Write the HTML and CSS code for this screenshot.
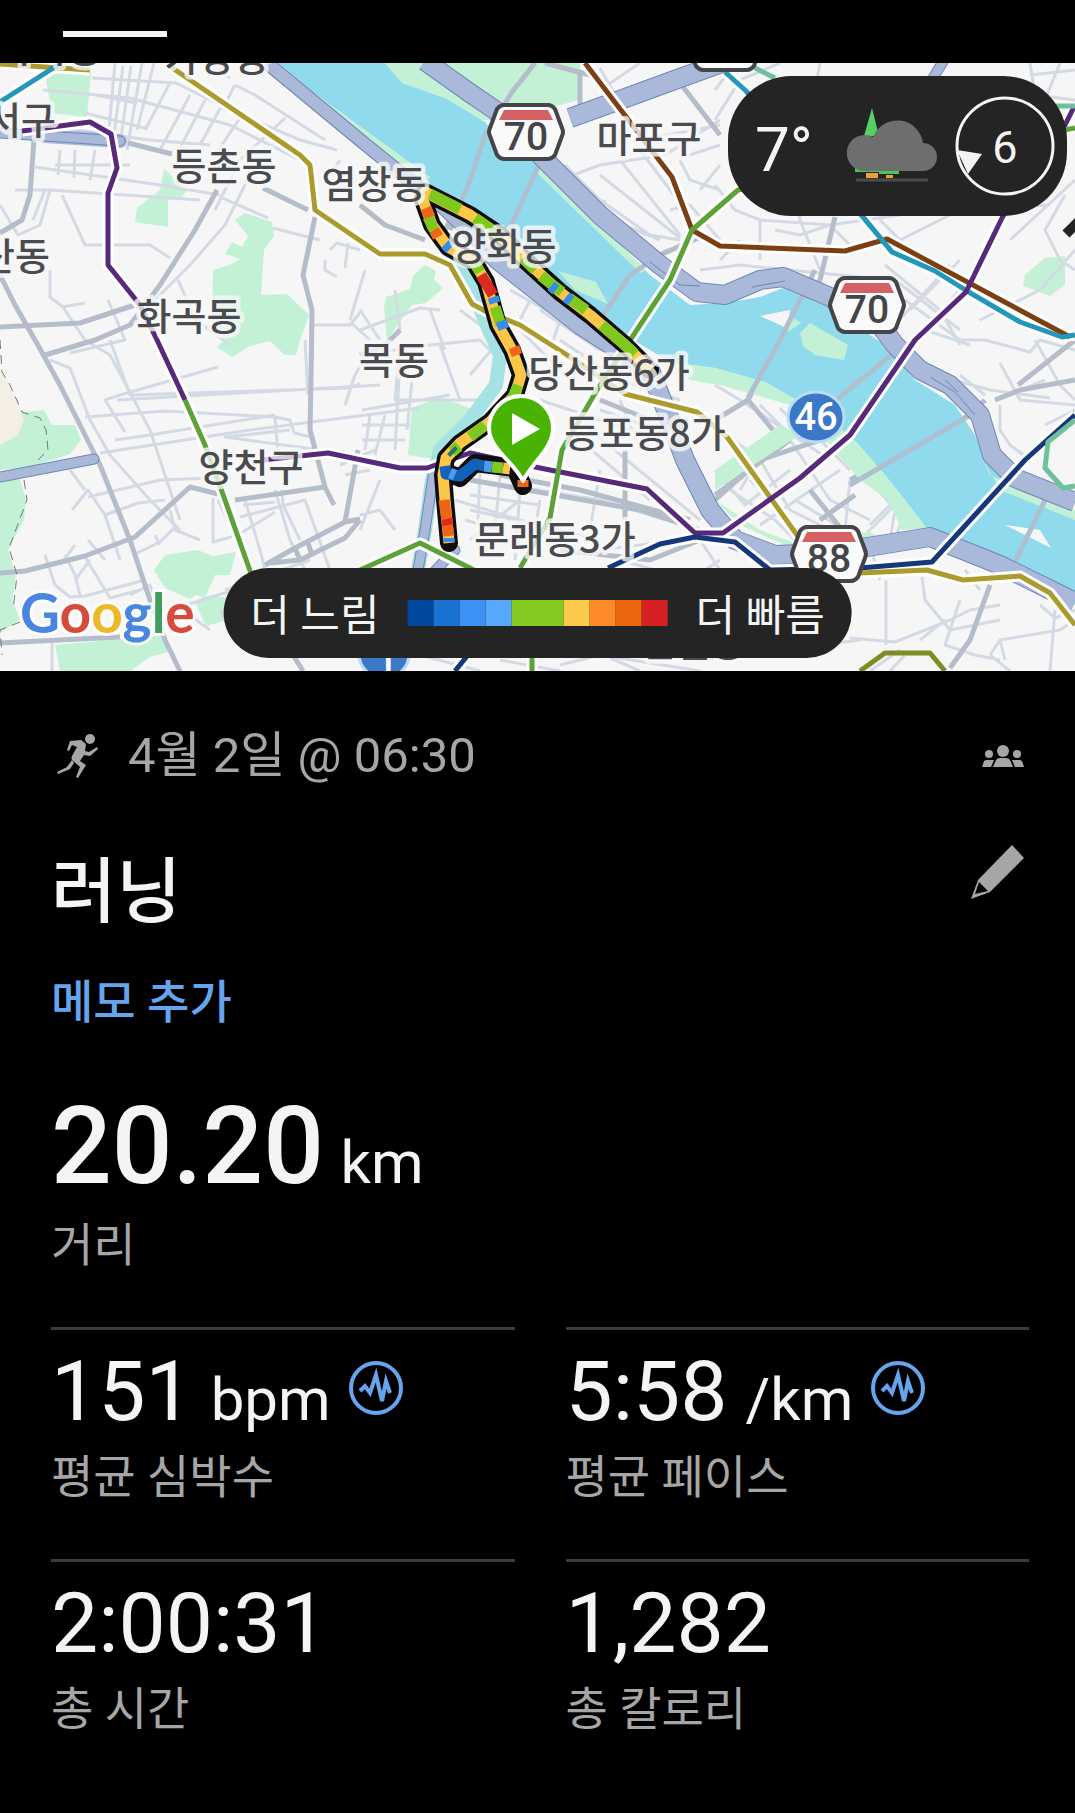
FILE: index.html
```html
<!DOCTYPE html>
<html lang="ko">
  <head>
    <meta charset="UTF-8" />
    <meta name="viewport" content="width=device-width, initial-scale=1.0" />
    <title>러닝</title>
    <link rel="stylesheet" href="styles.css">
  </head>
  <body>
    <header class="tab-bar">
      <div class="tab-indicator"></div>
    </header>

    <section class="map-section">
      <svg class="map" viewBox="0 63 1075 608" preserveAspectRatio="xMidYMid slice" role="img" aria-label="러닝 경로 지도">
        <rect class="land" x="0" y="63" width="1075" height="608" />

        <!-- parks -->
        <g class="park">
          <path d="M45 74L91 72L87 117L52 113Z" />
          <path d="M164 169L187 190L181 198L168 200V227L135 222L137 208L160 190Z" />
          <path d="M235 220L245 213L272 222L274 236L264 250L261 295L287 294L309 315L300 340L296 355H285L270 341L250 346L232 357L217 347L224 340L212 320L213 270L232 264L240 259L225 254L232 242L242 247L248 236Z" />
          <path d="M387 340L384 306L386 297L410 289L413 276L425 265L436 271L434 280L443 288L426 303L412 305Z" />
          <path d="M15 413L44 410L52 425H75L81 440L70 454L30 467L0 470V444Z" />
          <path d="M0 480L20 479L26 500L24 520L8 550L16 575L12 600L20 620L0 632Z" />
          <path d="M154 570L165 555L198 550L213 556L236 552L230 575L215 575L205 598L196 595L190 599L165 588Z" />
          <path d="M195 602L205 596L235 598L227 620L206 626Z" />
          <path d="M55 645L165 635L168 652L150 657L130 671H60Z" />
          <path d="M412 408L440 397L475 410L490 415L440 460L408 455Z" />
          <path d="M385 63H580V100L500 120L480 120L440 96L402 83Z" />
          <path d="M558 271L600 284L608 304L570 290Z" />
          <path d="M1025 275L1045 258L1065 256V285L1050 296L1023 286Z" />
          <path d="M440 250L475 275L492 320L485 340L470 300Z" />
        </g>
        <path class="sand" d="M0 370L10 385L24 420L18 435L0 445Z" />

        <!-- streets -->
        <g class="street">
          <path d="M92 78L176 83L230 110L300 140L337 150M43 90L130 98L230 125L300 160M40 125L150 140L210 145M115 63L108 140M123 66L112 150M131 66L120 145M142 63L127 150M154 63L137 130M170 83L145 130M95 95L137 103M85 113L145 128M190 95L160 150M205 100L180 148M222 105L200 145M240 118L215 155M15 190H50L200 200M35 167L160 185L220 195M60 150L58 175M75 150L74 178M95 150L90 180M55 165H130M62 195L85 245L150 245L170 258M50 190L40 225L18 235L0 205M45 190L33 220" />
          <path d="M235 85L255 95L325 140M210 63L230 78M235 85L222 110M285 118L240 160L215 210M250 175L225 225L190 265L130 325M220 197L268 218M330 175L340 160M108 300L125 340L70 353M50 270V297L63 307L85 340L110 355L150 430L180 520M62 307L85 303M178 280L196 320L230 345M273 228L320 240M313 325H350L362 310M350 322L370 340M330 250L337 243L360 250M348 243L345 268M325 260V270L337 277" />
          <path d="M85 417L165 411L275 417L290 420L294 433L315 438M100 453L250 430L420 408M115 440L150 435L275 415M275 417L278 455M290 430L225 437L320 450M125 432L105 400L120 395L218 367M50 360L70 368L90 420L110 455L150 500L180 530M110 340L130 395L350 388L360 384M117 400L380 385M72 510L88 490L105 515L120 560M88 497L160 480L210 478M105 515L138 503L165 500M170 510L175 530L200 540M175 527L160 542L137 553M155 535L160 545M70 470L85 490M45 555L55 585L70 597L85 596L145 580M85 557L110 598L140 590M65 555L75 575L80 595M88 540L105 560M75 545L60 565M90 560L75 580M52 640V671M130 595L150 585L160 610" />
          <path d="M213 498V542L238 535L275 512M218 500L235 535M245 500L260 550L265 570M275 490L290 540L310 580M240 517L305 500L330 570M243 505L275 502M282 490L283 505L300 540M340 465L375 450M345 475L370 470M345 405L355 375L370 350M305 340L308 395M225 590L310 560M170 610L250 585L270 570M175 605L210 630M240 640L260 620M220 610L235 640" />
          <path d="M362 410L450 395M362 425H410M362 440H405M370 415L365 450M385 415L375 455M400 360L395 450M412 380L407 430M360 355L430 345L480 340L500 360M400 345L395 400L480 400M440 345L460 400M460 310L500 340L470 375M430 310L445 350M360 330L420 308L440 310M360 515L380 510L395 530M380 480L360 530M360 310L380 340M395 290L400 330M365 270L350 320" />
          <path d="M600 68L640 140L720 125M640 63L600 90M560 180L600 165L665 155L720 120M565 165L600 200L650 235L680 240M605 200L600 215L660 240M640 150L700 230M600 175L680 238M680 158L720 145M700 190L720 165M680 160L690 180L720 190M620 160L680 235M670 210L690 205L720 240M700 270L740 265L890 280M715 120L740 80L780 63M735 63L715 90M820 63L810 120M1030 63L1035 95L1075 100M1060 63L1045 100M1030 75L1075 70M715 185L735 210L760 220V260M760 220L830 225L900 215M790 160L800 220L820 270M740 240L720 260M775 230L800 235L830 225L850 245M880 220L910 250M900 240L950 215M950 210L1050 205M1065 195L1045 230L1060 260L1075 270M980 320L1040 290L1075 250M1010 240L1075 180M910 310L960 260M905 300L960 340M885 265L940 310L960 345M925 335L970 275M890 330L950 265M895 280L960 330" />
          <path d="M715 385L740 400L800 440L830 460M760 405L790 435M780 408L815 445M720 430L760 460L790 510L830 530M730 490L775 520L800 545M740 480L770 450L810 425M715 470L745 505L790 470M760 525L840 470M790 440L830 500L870 520M810 430L850 470M795 500L845 530L850 480M850 455L895 510L890 540M870 525L915 480L895 540M830 420L850 450M750 480L770 500M755 465L740 490M860 540L910 490L895 480" />
          <path d="M886 580V645M922 577L925 600L950 630L1000 620M850 638L895 642L950 620L970 610L1000 605M960 600L945 645L975 655L1000 660M990 655L1000 640L1060 630L1075 620M1055 610L1050 671M1040 605L1055 618L1075 610M965 570L980 590M900 650L870 671M905 655L890 671M990 655L1010 671M920 640L945 620M870 545L880 580M1000 640L1005 660" />
          <path d="M960 340H985L1030 352L1040 340L1075 350M1000 363L1020 400L1075 405M1035 340L1060 385L1075 400M985 395L960 375M1000 405V430L1010 445L1030 460M1010 395L1045 380M935 375L990 390L1050 398M970 345L925 330M1045 425L1075 410" />
          <path d="M475 480L600 500L700 530M470 495L540 505M480 470L478 520M500 475L495 530M520 490L515 560M540 500L530 560M560 470L550 520M600 470L590 530M470 510L560 530M465 520L500 530M580 440L650 500M590 430L700 520M600 410L660 430L700 480M470 540L520 500M455 500L520 520L600 540M600 550L680 540M620 560L690 580L720 560M560 340L620 380L680 400M540 310L600 350M520 330L570 380M510 290L600 340M530 300L520 320M560 320L550 350M700 540L720 570M540 400L660 440M620 400L640 450" />
          <path d="M420 655L480 671M500 660L560 671M560 665L600 655L700 671M610 658L640 671M700 660L860 640" />
        </g>

        <g class="arterial">
          <path d="M34 140L30 195L22 220L0 233M0 275L15 305L35 340L60 385L100 465L130 540L150 600L165 640L180 671M0 327L80 323L135 305M0 573L25 571L85 556L135 537L190 487L218 494M235 500L325 487L310 430L311 380L312 310L303 275L315 217M325 487L334 505M263 188L308 210M217 190L195 230L160 285L130 325L95 340L45 355M0 643L120 637M265 565L295 548L345 522L360 519M270 563L300 560L345 538L360 520M128 143L172 154M345 522L358 450M295 548L300 560M308 543L312 555M360 205L385 225L425 240M290 650L303 671" />
          <path d="M535 63L512 92L470 160L460 200L445 230M580 70V105M545 63L590 75M540 163L520 200L500 245M670 250L660 255L705 235M680 83L720 135M360 355L385 345L400 330M470 480L640 510L715 535M500 475L580 490L690 520M600 400L650 420M625 450V520M560 550L650 560L700 540M835 217L820 280L775 350L748 400L715 420M748 400L773 430M715 500L760 460L850 430M715 495L790 440M810 490L850 540M820 520L855 495M1018 385L1075 340M995 400L1020 390L1075 380M990 585L970 640L950 668M780 295L760 350M850 480L970 415L985 400M895 352L840 395M1045 500L1010 570" />
        </g>

        <!-- river -->
        <path class="water" d="M278 63H385L402 83L445 98L485 122L495 135L545 170L650 275L690 305L725 303L760 297L783 288L830 308L885 345L915 380L955 405L975 435L985 460L1075 520V605L1000 570L940 535L925 532L905 500L885 475L850 435L800 402L765 382L715 368L670 362L625 335L560 285L500 250L430 190Z" />
        <g class="park">
          <path d="M280 68L430 177L425 182L276 72Z" />
          <path d="M540 165L646 270L640 273L536 172Z" />
          <path d="M558 271L596 282L608 304L575 290Z" />
          <path d="M670 362L715 368L765 382L800 402L850 435L885 475L905 500L927 528L902 530L888 500L860 480L830 445L790 405L720 385L690 380Z" />
          <path d="M715 470L780 425L800 435L715 490Z" />
          <path d="M715 500L760 530L800 545L870 532L880 538L800 552L740 525Z" />
          <path d="M800 333L810 323L848 345L844 360L815 355L803 346Z" />
          <path d="M983 460L990 475L1075 510V520L1000 490Z" />
        </g>
        <path class="islet" d="M760 316L790 310L787 328ZM1005 525L1040 530L1051 548Z" />
        <path class="park" d="M790 316L801 323L788 332Z" />
        <path class="bridge" d="M487 130L470 180L450 230M540 163L525 195L500 250M645 265L630 275L600 320M815 270L780 340L748 398M895 352L830 405M970 415L850 485M1045 500L1012 568" />
        <path class="stream" d="M445 245L470 285L485 320L500 355L496 385L470 420L440 450L432 480L425 530L418 570" />

        <!-- expressways -->
        <g class="riverside-edge">
          <path d="M267 63L360 140L440 205L500 262" />
        </g>
        <g class="expressway-edge">
          <path d="M425 61L470 93L495 110L550 165L600 215L660 265L697 292L725 295L760 280L783 277L830 297L880 325L895 345L920 370L950 385L980 415L992 455L1015 478L1075 502" />
          <path d="M480 243L500 262L580 325L650 370L670 420L685 460L710 510L735 540L775 555L830 553L930 537L1000 565L1075 602" />
          <path d="M570 118L620 100L680 78L730 60" />
        </g>
        <path class="riverside" d="M267 63L360 140L440 205L500 262" />
        <g class="expressway">
          <path d="M425 61L470 93L495 110L550 165L600 215L660 265L697 292L725 295L760 280L783 277L830 297L880 325L895 345L920 370L950 385L980 415L992 455L1015 478L1075 502" />
          <path d="M480 243L500 262L580 325L650 370L670 420L685 460L710 510L735 540L775 555L830 553L930 537L1000 565L1075 602" />
          <path d="M570 118L620 100L680 78L730 60" />
          <path d="M45 136L120 141" />
        </g>
        <path class="ramp-edge" d="M0 477L94 459M434 470L425 530L418 570M455 550L435 571M0 133L120 141M930 83L944 60" />
        <path class="ramp" d="M0 477L94 459M434 470L425 530L418 570M455 550L435 571M0 133L120 141M930 83L944 60" />
        <path class="ramp-split" d="M650 262L680 285L700 286M930 377L955 392L975 415M945 380L958 392M752 287L785 281" />
        <path class="border-line" d="M0 340L2 372L10 385L22 412L40 418L46 430L48 450L38 460M24 480L27 500L9 548L17 575L13 610M20 622L0 630L2 655" />

        <!-- subway lines -->
        <g class="line-halo">
          <path d="M0 64L90 70M168 65L300 155L310 165L315 210L380 254H425L450 265L472 304L487 312L520 325L567 355L625 394L697 412L727 437L797 535L830 574L860 573L927 570L963 580L1020 576L1050 593L1075 625" />
          <path d="M0 102L58 65M725 72L745 90L863 217L892 252L935 271L967 291L1020 322L1062 337L1075 335" />
          <path d="M22 131L90 122L111 134L117 168L108 193V265L140 305L157 340L185 400L205 445L225 500L255 585M262 460L328 453L400 468H427L450 460L470 453L540 468L647 489L695 533H723L800 478L850 435L915 340L966 292L1003 216L1065 125L1075 105" />
          <path d="M585 63L672 177L692 230L720 246L845 251L887 239L1070 337M1075 128L738 190L692 230L670 280L597 390L562 450L550 518L520 568M360 570L420 543L480 573M532 655V671" />
          <path d="M608 568L660 544L695 537L735 542L770 570L860 568L932 562L1025 460L1075 415M455 671L480 640" />
        </g>
        <g class="line">
          <path class="olive" d="M0 64L90 70M168 65L300 155L310 165L315 210L380 254H425L450 265L472 304L487 312L520 325L567 355L625 394L697 412L727 437L797 535L830 574L860 573L927 570L963 580L1020 576L1050 593L1075 625" />
          <path class="teal" d="M0 102L58 65M725 72L745 90L863 217L892 252" />
          <path class="brown" d="M585 63L672 177L692 230L720 246L845 251L887 239L1070 337" />
          <path class="teal" d="M863 217L892 252L935 271L967 291L1020 322L1062 337L1075 335" />
          <path class="purple" d="M22 131L90 122L111 134L117 168L108 193V265L140 305L157 340L185 400M262 460L328 453L400 468H427L450 460L470 453L540 468L647 489L695 533H723L800 478L850 435L915 340L966 292L1003 216L1065 125L1075 105" />
          <path class="green" d="M185 400L205 445L225 500L255 585M1075 128L738 190L692 230L670 280L597 390L562 450L550 518L520 568M360 570L420 543L480 573M532 655V671" />
          <path class="navy" d="M608 568L660 544L695 537L735 542L770 570L860 568L932 562L1025 460L1075 415M455 671L480 640" />
          <path class="dark-olive" d="M860 671L885 653H930L945 671" />
          <path class="mint" d="M1075 420L1048 442L1045 468L1063 488L1075 486M755 68L775 78M1055 106H1075" />
        </g>
        <path class="tip" d="M1066 234L1082 218" />

        <!-- recorded route -->
        <path class="route-edge" d="M650 370L625 345L590 315L560 292L525 260L500 235L470 215L425 192L423 200L432 225L448 247L474 262L486 282L498 325L512 350L521 375L515 395L490 422L460 443L446 458L443 475L445 500L449 543M446 472L460 478L475 463L515 468L523 486" />
        <g class="route">
          <path stroke="#fcc648" d="M650 370L625 345L590 315L560 292L525 260L500 235L470 215L425 192L423 200L432 225L448 247L474 262L486 282L498 325L512 350L521 375L515 395L490 422L460 443L446 458L443 475L445 500L449 543" />
          <path stroke="#7fc91f" d="M430 194L460 209M475 218L503 238M523 258L535 270M541 276L562 292M569 298L586 310M602 325L625 345L635 354M428 217L434 230M474 262L480 272M495 307L501 325M518 385L513 397L500 413M485 425L470 437" />
          <path stroke="#ef6516" d="M426 208L430 217M434 230L438 237M514 347L517 355M444 500L449 536" />
          <path stroke="#dc2a21" d="M481 275L493 295M447 519L448 525" />
          <path stroke="#348ee8" d="M493 297L495 303M501 321L504 329M551 286L556 290M566 297L571 301M445 244L450 249M449 538L449 542" />
          <path stroke="#ef6516" d="M523 480V487" />
          <path stroke="#1262bd" d="M445 466L446 474L460 476L475 464L484 466" />
          <path stroke="#4c9ce9" d="M484 466L492 467M450 473L455 475" />
          <path stroke="#7fc91f" d="M492 467L503 468M452 452L459 446" />
          <path stroke="#fcc648" d="M503 468L510 469" />
          <path stroke="#20746c" d="M451 450L454 453" />
        </g>

        <!-- place names -->
        <g class="place">
          <text x="56" y="134" text-anchor="end">강서구</text>
          <text x="50" y="270" text-anchor="end">발산동</text>
          <text x="217" y="71">가양동</text>
          <text x="50" y="62">마곡동</text>
          <text x="224" y="180">등촌동</text>
          <text x="374" y="198">염창동</text>
          <text x="504" y="260">양화동</text>
          <text x="649" y="152">마포구</text>
          <text x="189" y="330">화곡동</text>
          <text x="394" y="374">목동</text>
          <text x="251" y="481">양천구</text>
          <text x="609" y="387">당산동6가</text>
          <text x="645" y="447">등포동8가</text>
          <text x="555" y="553">문래동3가</text>
          <text x="693" y="656">신길동</text>
        </g>

        <!-- road shields -->
        <g class="shield">
          <g transform="translate(526 132)">
            <path class="shield-body" d="M-22 -27H22Q26 -27 29 -23L36 -4Q38 0 36 4L29 23Q26 27 22 27H-22Q-26 27 -29 23L-36 4Q-38 0 -36 -4L-29 -23Q-26 -27 -22 -27Z" />
            <path class="shield-top" d="M-22 -22H22L27 -12H-27Z" />
            <text y="18">70</text>
          </g>
          <g transform="translate(867 305)">
            <path class="shield-body" d="M-22 -27H22Q26 -27 29 -23L36 -4Q38 0 36 4L29 23Q26 27 22 27H-22Q-26 27 -29 23L-36 4Q-38 0 -36 -4L-29 -23Q-26 -27 -22 -27Z" />
            <path class="shield-top" d="M-22 -22H22L27 -12H-27Z" />
            <text y="18">70</text>
          </g>
          <g transform="translate(829 554)">
            <path class="shield-body" d="M-22 -27H22Q26 -27 29 -23L36 -4Q38 0 36 4L29 23Q26 27 22 27H-22Q-26 27 -29 23L-36 4Q-38 0 -36 -4L-29 -23Q-26 -27 -22 -27Z" />
            <path class="shield-top" d="M-22 -22H22L27 -12H-27Z" />
            <text y="18">88</text>
          </g>
          <path class="shield-body" transform="translate(725 43)" d="M-22 -27H22Q26 -27 29 -23L36 -4Q38 0 36 4L29 23Q26 27 22 27H-22Q-26 27 -29 23L-36 4Z" />
        </g>
        <g class="route-badge">
          <ellipse cx="816" cy="417" rx="28" ry="25" />
          <text x="816" y="430">46</text>
          <ellipse cx="384" cy="654" rx="25" ry="24" />
          <text x="387" y="671">1</text>
        </g>

        <!-- start pin -->
        <path class="pin" d="M523 481C514 462 489 449 489 428A32 32 0 0 1 553 428C553 449 532 462 523 481Z" />
        <path class="pin-arrow" d="M512 413L540 429L512 445Z" />

        <text class="google" x="20" y="633"><tspan fill="#4a86e0">G</tspan><tspan fill="#d84a3c">o</tspan><tspan fill="#edb927">o</tspan><tspan fill="#4a86e0">g</tspan><tspan fill="#3fa05a">l</tspan><tspan fill="#d84a3c">e</tspan></text>
      </svg>

      <div class="weather">
        <span class="temperature">7°</span>
        <svg class="weather-icon" viewBox="0 0 90 76" aria-hidden="true">
          <path fill="#56d063" d="M25 0L32 28H17Z" />
          <path fill="#48c957" d="M8 60H52V66H32V64H8Z" />
          <path fill="#f0a03a" d="M19 65H31V70H19ZM39 67H46V70H39Z" />
          <path fill="#6e6e6e" d="M17 63A18 18 0 1 1 26 29A26 26 0 0 1 76 35A14 14 0 0 1 76 63Z" />
          <path fill="#4c4c4c" d="M9 70.500H81V73.500H9Z" />
        </svg>
        <div class="wind">
          <svg class="wind-ring" viewBox="0 0 100 100" aria-hidden="true">
            <circle cx="50" cy="50" r="48" />
            <path d="M2 54L27 58L13 78Z" />
          </svg>
          <span class="wind-speed">6</span>
        </div>
      </div>

      <div class="legend">
        <span>더 느림</span>
        <div class="legend-bar">
          <i class="pace-1"></i>
          <i class="pace-2"></i>
          <i class="pace-3"></i>
          <i class="pace-4"></i>
          <i class="pace-5"></i>
          <i class="pace-6"></i>
          <i class="pace-7"></i>
          <i class="pace-8"></i>
          <i class="pace-9"></i>
        </div>
        <span>더 빠름</span>
      </div>
    </section>

    <main class="summary">
      <div class="date-row">
        <svg class="run-icon" viewBox="0 0 42 46" aria-hidden="true">
          <circle cx="33" cy="6" r="5" />
          <path d="M13 8L24 7L29 11L28 18L32 19L40 14L41 16L33 23L27 22L23 28L29 32L21 45L19 44L23 34L15 27Q14 25 15 23L20 14L15 12L12 18L10 17Z" />
          <path d="M15 27L17 30L13 36L1 41L0 39L10 34Z" />
        </svg>
        <span class="date">4월 2일 @ 06:30</span>
        <button class="icon-button" type="button" aria-label="공개 범위">
          <svg class="group-icon" viewBox="0 0 42 23">
            <circle cx="21" cy="6" r="6" />
            <circle cx="7" cy="9" r="4" />
            <circle cx="35" cy="9" r="4" />
            <path d="M11 22L14 15Q15 13 18 13H24Q27 13 28 15L31 22ZM0 22L2 16Q3 15 5 15H12L9 22ZM42 22L40 16Q39 15 37 15H30L33 22Z" />
          </svg>
        </button>
      </div>

      <div class="title-row">
        <h1 class="title">러닝</h1>
        <button class="icon-button" type="button" aria-label="이름 편집">
          <svg class="edit-icon" viewBox="0 0 53 54">
            <path fill-rule="evenodd" d="M41 0L53 13L19 47L0 54L7 35ZM8 37L4 49L17 46Z" />
          </svg>
        </button>
      </div>

      <a class="memo-link" href="#memo">메모 추가</a>

      <div class="distance">
        <div class="distance-value">20.20 <span class="unit">km</span></div>
        <div class="stat-label">거리</div>
      </div>

      <div class="stats-grid">
        <div class="stat">
          <div class="stat-value">
            <span>151</span>
            <span class="unit">bpm</span>
            <button class="icon-button chart-button" type="button" aria-label="심박수 차트">
              <svg class="chart-icon" viewBox="0 0 54 54">
                <circle cx="27" cy="27" r="25" />
                <path d="M11 30L16 25L21 32L27 14L33 40L37 20L41 32" />
              </svg>
            </button>
          </div>
          <div class="stat-label">평균 심박수</div>
        </div>
        <div class="stat">
          <div class="stat-value">
            <span>5:58</span>
            <span class="unit">/km</span>
            <button class="icon-button chart-button" type="button" aria-label="페이스 차트">
              <svg class="chart-icon" viewBox="0 0 54 54">
                <circle cx="27" cy="27" r="25" />
                <path d="M11 30L16 25L21 32L27 14L33 40L37 20L41 32" />
              </svg>
            </button>
          </div>
          <div class="stat-label">평균 페이스</div>
        </div>
        <div class="stat">
          <div class="stat-value"><span>2:00:31</span></div>
          <div class="stat-label">총 시간</div>
        </div>
        <div class="stat">
          <div class="stat-value"><span>1,282</span></div>
          <div class="stat-label">총 칼로리</div>
        </div>
      </div>
    </main>
  </body>
</html>
```

FILE: styles.css
```css
body {
  margin: 0;
  background: #000;
  color: #f4f4f4;
  font-family: Roboto, "Noto Sans CJK KR", sans-serif;
}

.tab-bar {
  display: flex;
  align-items: flex-end;
  height: 37px;
  padding: 0 63px 26px;
}

.tab-indicator {
  width: 104px;
  height: 6px;
  background: #f4f4f4;
}

/* map */
.map-section {
  position: relative;
  overflow: hidden;
}

.map {
  display: block;
  width: 100%;
  height: 608px;
}

.map path {
  stroke-linejoin: round;
}

.land {
  fill: #f6f6f7;
}

.park {
  fill: #c3f1d5;
}

.sand {
  fill: #f4eee4;
}

.water {
  fill: #90daee;
}

.islet {
  fill: #f6f6f7;
}

.street {
  fill: none;
  stroke: #d4dae4;
  stroke-width: 3;
}

.arterial {
  fill: none;
  stroke: #b5bdca;
  stroke-width: 5;
}

.bridge {
  fill: none;
  stroke: #aebfd0;
  stroke-width: 5;
}

.stream {
  fill: none;
  stroke: #a4e2e4;
  stroke-width: 14;
}

.riverside-edge {
  fill: none;
  stroke: #6f87b5;
  stroke-width: 14;
}

.riverside {
  fill: none;
  stroke: #aab9da;
  stroke-width: 12;
}

.expressway-edge {
  fill: none;
  stroke: #6f87b5;
  stroke-width: 20;
}

.expressway {
  fill: none;
  stroke: #aab9da;
  stroke-width: 18;
}

.expressway path:last-child {
  stroke-width: 14;
  stroke-linecap: round;
}

.ramp-edge {
  fill: none;
  stroke: #6f87b5;
  stroke-width: 11;
  stroke-linecap: round;
}

.ramp {
  fill: none;
  stroke: #aab9da;
  stroke-width: 9;
  stroke-linecap: round;
}

.ramp-split {
  fill: none;
  stroke: #6f87b5;
  stroke-width: 1;
}

.border-line {
  fill: none;
  stroke: #777;
  stroke-width: 1;
  stroke-dasharray: 9 6;
}

.line-halo {
  fill: none;
  stroke: #fff;
  stroke-width: 11;
}

.line {
  fill: none;
  stroke-width: 5;
}

.olive {
  stroke: #ab9b2c;
}

.dark-olive {
  stroke: #7f8b25;
}

.teal {
  stroke: #2397ba;
}

.brown {
  stroke: #7a4013;
}

.purple {
  stroke: #56297a;
}

.green {
  stroke: #5ca238;
}

.navy {
  stroke: #16387b;
}

.mint {
  stroke: #6fc19b;
}

.tip {
  stroke: #242424;
  stroke-width: 10;
}

.route-edge {
  fill: none;
  stroke: #0d0d0d;
  stroke-width: 18;
  stroke-linecap: round;
}

.route {
  fill: none;
  stroke-width: 11;
}

.place {
  font-family: "Noto Sans CJK KR", sans-serif;
  font-size: 38px;
  font-weight: 500;
  fill: #4a4b4f;
  stroke: #f8f8f8;
  stroke-opacity: 0.8;
  stroke-width: 9px;
  stroke-linejoin: round;
  paint-order: stroke;
  text-anchor: middle;
}

.shield {
  font-size: 39px;
  font-weight: 500;
  text-anchor: middle;
  fill: #444548;
}

.shield-body {
  fill: #fafafa;
  stroke: #444548;
  stroke-width: 4;
}

.shield-top {
  fill: #d46164;
}

.route-badge {
  font-size: 38px;
  font-weight: 500;
  text-anchor: middle;
  fill: #fff;
}

.route-badge ellipse {
  fill: #3c78c8;
  stroke: #b9dcf5;
  stroke-width: 3;
}

.pin {
  fill: #49b304;
  stroke: #fff;
  stroke-width: 4;
}

.pin-arrow {
  fill: #fff;
}

.google {
  font-family: Lato, sans-serif;
  font-size: 55px;
  font-weight: 700;
  stroke: #fff;
  stroke-width: 6px;
  stroke-opacity: 0.8;
  paint-order: stroke;
}

.weather {
  position: absolute;
  top: 13px;
  right: 8px;
  box-sizing: border-box;
  display: flex;
  align-items: center;
  gap: 18px;
  width: 339px;
  height: 140px;
  padding: 0 12px 0 27px;
  border-radius: 64px;
  background: #242424;
}

.temperature {
  margin-right: auto;
  padding-top: 8px;
  font-size: 62px;
  line-height: 80px;
}

.weather-icon {
  width: 90px;
  height: 76px;
}

.wind {
  display: grid;
  place-items: center;
}

.wind-ring,
.wind-speed {
  grid-area: 1 / 1;
}

.wind-ring {
  width: 100px;
  height: 100px;
  fill: none;
}

.wind-ring circle {
  stroke: #f4f4f4;
  stroke-width: 3;
}

.wind-ring path {
  fill: #f4f4f4;
}

.wind-speed {
  padding-top: 4px;
  font-size: 45px;
  line-height: 60px;
}

.legend {
  position: absolute;
  bottom: 13px;
  left: 50%;
  transform: translateX(-50%);
  display: flex;
  align-items: center;
  gap: 28px;
  height: 90px;
  padding: 0 27px;
  border-radius: 45px;
  background: #242424;
  font-size: 43px;
  line-height: 60px;
  white-space: nowrap;
}

.legend span {
  padding-top: 6px;
}

.legend-bar {
  display: flex;
  width: 260px;
  height: 26px;
}

.legend-bar i {
  flex: 1;
}

.pace-1 {
  background: #00489e;
}

.pace-2 {
  background: #1973d3;
}

.pace-3 {
  background: #3c91f2;
}

.pace-4 {
  background: #57a8fd;
}

.legend-bar .pace-5 {
  flex: 2;
  background: #82ca1f;
}

.pace-6 {
  background: #fcca4b;
}

.pace-7 {
  background: #fb8a27;
}

.pace-8 {
  background: #ec660f;
}

.pace-9 {
  background: #d52122;
}

/* activity summary */
.summary {
  padding: 55px 46px 40px 51px;
}

.icon-button {
  display: flex;
  padding: 0;
  border: none;
  background: none;
  color: #a6a6a6;
  cursor: pointer;
}

.icon-button svg {
  fill: currentColor;
}

.date-row {
  display: flex;
  align-items: center;
  padding: 0 5px 0 6px;
  margin-bottom: 59px;
}

.date-row .icon-button {
  margin-left: auto;
}

.run-icon {
  width: 42px;
  height: 46px;
  margin-right: 29px;
  fill: #a6a6a6;
}

.date {
  font-size: 49px;
  line-height: 60px;
  color: #a6a6a6;
}

.group-icon {
  width: 42px;
  height: 23px;
}

.title-row {
  display: flex;
  justify-content: space-between;
  align-items: flex-start;
  padding-right: 5px;
  margin-bottom: 40px;
}

.title {
  margin: 7px 0 0;
  font-size: 71px;
  font-weight: 500;
  line-height: 80px;
}

.edit-icon {
  width: 53px;
  height: 54px;
}

.memo-link {
  display: block;
  width: fit-content;
  margin-bottom: 55px;
  font-size: 46px;
  font-weight: 500;
  line-height: 60px;
  color: #66a5ee;
  text-decoration: none;
}

.distance {
  margin-bottom: 57px;
}

.distance-value {
  margin-bottom: 13px;
  font-size: 107px;
  font-weight: 500;
  line-height: 120px;
}

.unit {
  font-size: 60px;
  font-weight: 400;
  line-height: 60px;
}

.distance-value .unit {
  margin-left: -10px;
}

.stat-label {
  font-size: 46px;
  line-height: 50px;
  color: #a6a6a6;
}

.stats-grid {
  display: grid;
  grid-template-columns: 1fr 1fr;
  gap: 57px 51px;
}

.stat {
  padding-top: 12px;
  border-top: 3px solid #3c3c3c;
}

.stat-value {
  display: flex;
  align-items: baseline;
  margin-bottom: 10px;
  font-size: 84px;
  line-height: 100px;
}

.stat-value .unit {
  margin-left: 18px;
}

.chart-button {
  align-self: flex-start;
  margin-top: 19px;
  margin-left: 18px;
  color: #66a5ee;
}

.chart-button .chart-icon {
  width: 54px;
  height: 54px;
  fill: none;
  stroke: currentColor;
  stroke-width: 4;
}
```
